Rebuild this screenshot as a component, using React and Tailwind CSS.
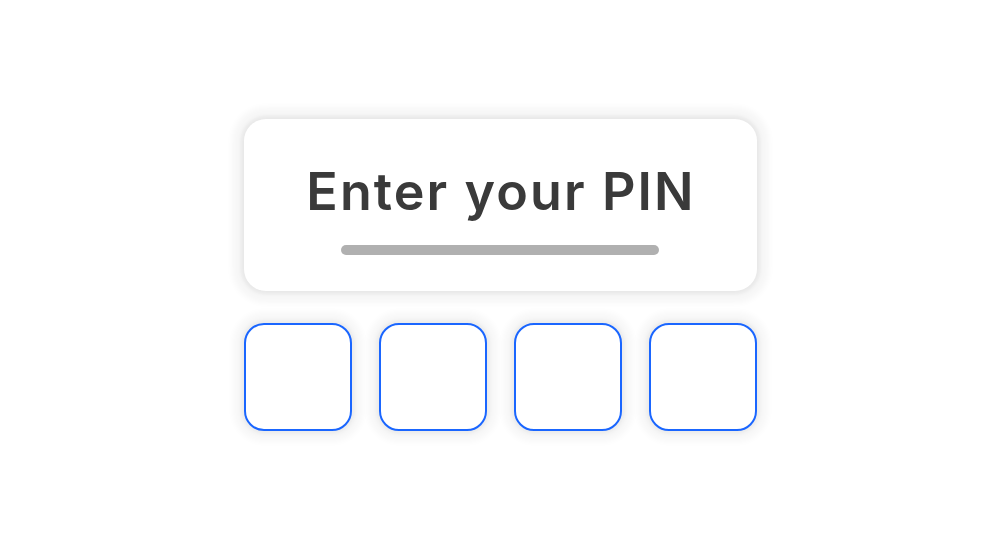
export default function App() {
  return (
    <div className="w-[1000px] h-[550px] bg-white flex items-center justify-center" style={{ fontFamily: '"Inter", "Open Sans", sans-serif' }}>
      <div className="w-[513px] flex flex-col gap-[32px]">
        <div className="h-[172px] bg-white rounded-[22px] shadow-[0_0_4px_3px_rgba(0,0,0,0.06),0_0_6px_12px_rgba(0,0,0,0.035)] flex flex-col items-center pt-[43px]">
          <div className="text-[52px] leading-[60px] font-semibold text-[#3a3a3a] tracking-[2.1px] pl-[2px]">Enter your PIN</div>
          <div className="mt-[23px] w-[318px] h-[10px] rounded-full bg-[#b0b0b0]"></div>
        </div>
        <div className="flex justify-between">
          {[0, 1, 2, 3].map((i) => (
            <div key={i} className="w-[108px] h-[108px] rounded-[20px] border-[2.5px] border-[#1a66ff] bg-white shadow-[0_0_4px_3px_rgba(0,0,0,0.05),0_0_6px_11px_rgba(0,0,0,0.03)]"></div>
          ))}
        </div>
      </div>
    </div>
  );
}
